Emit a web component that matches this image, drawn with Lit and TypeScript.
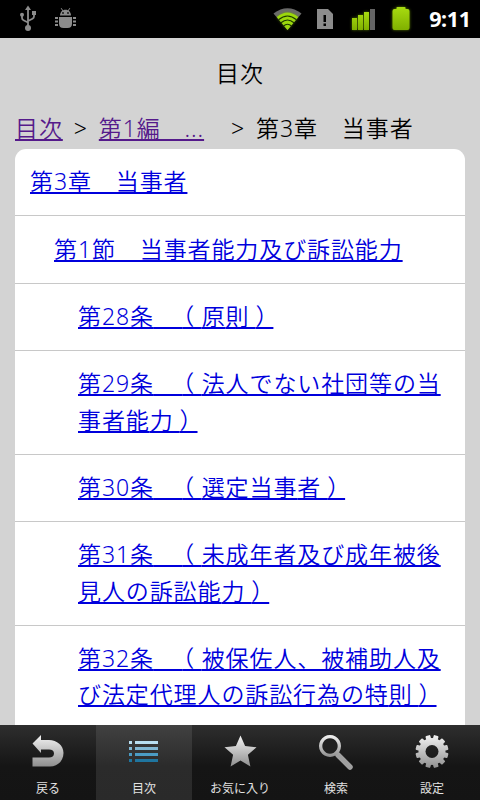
import { LitElement, html, svg, css } from "lit";
import { customElement } from "lit/decorators.js";

interface Entry { level: number; lines: string[]; }

const ENTRIES: Entry[] = [
  { level: 0, lines: ["第3章　当事者"] },
  { level: 1, lines: ["第1節　当事者能力及び訴訟能力"] },
  { level: 2, lines: ["第28条　（原則）"] },
  { level: 2, lines: ["第29条　（法人でない社団等の当", "事者能力）"] },
  { level: 2, lines: ["第30条　（選定当事者）"] },
  { level: 2, lines: ["第31条　（未成年者及び成年被後", "見人の訴訟能力）"] },
  { level: 2, lines: ["第32条　（被保佐人、被補助人及", "び法定代理人の訴訟行為の特則）"] },
];

@customElement("status-bar")
class StatusBar extends LitElement {
  static styles = css`
    :host { display: flex; height: 38px; background: #000; align-items: center; justify-content: space-between; }
    svg { display: block; }
    .clock { color: #fff; font: bold 21.5px/38px "Noto Sans", sans-serif; width: 50px; text-align: center; margin-right: 5px; letter-spacing: -0.3px; }
    .group { display: flex; align-items: center; height: 38px; }
  `;
  render() {
    return html`
      <div class="group">
        <svg width="100" height="38" viewBox="0 0 100 38">
          <g fill="none" stroke="#8c8c8c" stroke-width="1.8">
            <path d="M28 27V9M28 22.500l-4.500-2.300q-1.500-.8-1.500-2.500V15M28 21l4.500-2.300q1.500-.8 1.500-2.500V14"/>
          </g>
          <g fill="#8c8c8c">
            <path d="M28 5.500l3 4.500h-6z"/><circle cx="28" cy="28" r="3"/><circle cx="22" cy="14.800" r="2"/><rect x="32" y="11" width="4" height="4"/>
            <path d="M60 15.500c0-3.500 2.400-5.800 5.500-5.800s5.500 2.300 5.500 5.800z"/>
            <path d="M59 17h13v6.500q0 4.500-4.500 4.500h-4q-4.500 0-4.500-4.500z"/>
            <path d="M55 17h3v2h-3zM55 20.500h3v2h-3zM55 24h3v2h-3zM73 17h3v2h-3zM73 20.500h3v2h-3zM73 24h3v2h-3z"/>
          </g>
          <path d="M63 11l-1.800-2.800M68 11l1.800-2.800" stroke="#8c8c8c" stroke-width="1"/>
          <circle cx="63" cy="13" r=".9" fill="#111"/><circle cx="68" cy="13" r=".9" fill="#111"/>
        </svg>
      </div>
      <div class="group">
        <svg width="155" height="38" viewBox="270 0 155 38">
          <defs>
            <linearGradient id="g" x2="0" y2="1"><stop stop-color="#a8dc10"/><stop offset="1" stop-color="#80b000"/></linearGradient>
            <filter id="glow" x="-40%" y="-40%" width="180%" height="180%"><feGaussianBlur stdDeviation="1.500"/></filter>
          </defs>
          <path d="M273.500 13.500Q287.500 3 301.500 13.500L287.500 30z" fill="#6a6a6a"/>
          <path d="M276.800 17Q287.500 8 298.200 17L287.500 30z" fill="#6fa000" filter="url(#glow)" opacity=".6"/>
          <path d="M276.800 17Q287.500 8 298.200 17L287.500 30z" fill="#9bd80c"/>
          <path d="M278.500 19.800Q287.500 12.200 296.500 19.800M281 22.800Q287.500 17.200 294 22.800M283.500 26Q287.500 22.500 291.500 26" fill="none" stroke="#1c3600" stroke-width="1.200"/>
          <path d="M317 9h11l5 5v15h-16z" fill="#8c8c8c"/>
          <path d="M323.500 15h2.500v7h-2.500zM323.500 23.500h2.500v2.500h-2.500z" fill="#000"/>
          <path d="M352 18h5v12h-5zM358 15h5v15h-5zM364 12h5v18h-5z" fill="#76a800" filter="url(#glow)" opacity=".7"/>
          <path d="M352 18h5v12h-5zM358 15h5v15h-5zM364 12h5v18h-5z" fill="url(#g)"/>
          <path d="M370 9h5v21h-5z" fill="#646464"/>
          <path d="M392.500 11q0-2 2-2h2v-2h9v2h2q2 0 2 2v17q0 2-2 2h-13q-2 0-2-2z" fill="#80b000" filter="url(#glow)" opacity=".7"/>
          <path d="M392.500 11q0-2 2-2h2v-1.500q0-.5 1-.5h7q1 0 1 .5v1.500h2q2 0 2 2v17q0 2-2 2h-13q-2 0-2-2z" fill="url(#g)"/>
        </svg>
        <div class="clock">9:11</div>
      </div>`;
  }
}

@customElement("contents-list")
class ContentsList extends LitElement {
  static styles = css`
    :host { display: block; margin: 0 15px; background: #fff; border-radius: 11px 11px 0 0; }
    .row { border-bottom: 1px solid #c8c8c8; padding: 14.3px 0 15.9px 15px; line-height: 36.2px; white-space: nowrap; }
    .l1 { padding-left: 39px; }
    .l2 { padding-left: 63px; }
    .link { color: #0000dc; text-decoration: underline; text-decoration-thickness: 1.5px; text-underline-offset: 2px; text-decoration-skip-ink: none; text-spacing-trim: space-all; }
    .gap { letter-spacing: 5.9px; }
    .open { letter-spacing: 7.4px; font-feature-settings: "halt"; }
    .close { letter-spacing: 6.4px; font-feature-settings: "halt"; }
    .last { letter-spacing: 6.9px; }
  `;
  private label(line: string) {
    const closed = line.endsWith("）");
    const body = closed ? line.slice(0, -2) : line;
    const last = closed ? html`<span class="last">${line.slice(-2, -1)}</span><span class="close">）</span>` : "";
    const at = body.indexOf("　（");
    if (at < 0) return html`${body}${last}`;
    return html`${body.slice(0, at)}<span class="gap">　</span><span class="open">（</span>${body.slice(at + 2)}${last}`;
  }
  render() {
    return ENTRIES.map(e => html`<div class="row l${e.level}">${e.lines.map(l => html`<div><a class="link">${this.label(l)}</a></div>`)}</div>`);
  }
}

const metal = svg`<defs><linearGradient id="m" x1="0" y1="0" x2="0" y2="1"><stop stop-color="#f4f4f4"/><stop offset="1" stop-color="#8e8e8e"/></linearGradient></defs>`;

const teeth = Array.from({ length: 12 }, (_, i) =>
  svg`<rect x="21.500" y="3.500" width="5" height="6" rx="1" transform="rotate(${i * 30 + 15} 24 20)"/>`);

const ICONS = {
  back: svg`<path d="M8.500 12.500L17 4v5h8c8 0 14.500 5.500 14.500 13S34 35.500 26 35.500H8.500v-9H25c3.200 0 5-1.500 5-4s-1.800-4-5-4h-8V22z" fill="url(#m)"/>`,
  list: svg`<g><path d="M9 10h3v3H9zM15 10h23v3H15z" fill="#b9def0"/><path d="M9 16h3v3H9zM15 16h23v3H15z" fill="#82b8d4"/><path d="M9 22h3v3H9zM15 22h23v3H15z" fill="#4b9cc4"/><path d="M9 28h3v3H9zM15 28h23v3H15z" fill="#1f759f"/></g>`,
  star: svg`<path d="M24.500 4.500l4.600 10.600 11.400 1.100-8.600 7.600 2.500 11.700-9.900-6-9.900 6 2.500-11.700L8.500 16.200l11.400-1.100z" fill="url(#m)"/>`,
  search: svg`<path d="M26 24L38 36" stroke="#a0a0a0" stroke-width="5.500" stroke-linecap="round"/><circle cx="18" cy="15" r="9" fill="#202020"/><path fill-rule="evenodd" d="M18 4a11 11 0 1 0 .01 0zM18 7.300a7.700 7.700 0 1 1-.01 0z" fill="url(#m)"/>`,
  gear: svg`<mask id="t"><rect width="48" height="40" fill="#000"/><g fill="#fff" transform="translate(0 .5)"><circle cx="24" cy="20" r="13.500"/>${teeth}</g><circle cx="24" cy="20.500" r="6.500" fill="#000"/></mask><rect x="7" y="3.500" width="34" height="34" fill="url(#m)" mask="url(#t)"/>`,
};

@customElement("tab-bar")
class TabBar extends LitElement {
  static styles = css`
    :host { display: grid; grid-template-columns: repeat(5, 96px); height: 75px; background: linear-gradient(#2e2e2e 0, #151515 55%, #141414); }
    .tab { display: flex; flex-direction: column; align-items: center; padding-top: 6px; color: #e2e2e2; font-size: 12px; line-height: 18px; }
    .active { background: linear-gradient(#414141 0, #2b2b2b 55%, #2a2a2a); }
    svg { display: block; margin-bottom: 9px; }
  `;
  render() {
    const tabs = [
      { icon: ICONS.back, name: "戻る" }, { icon: ICONS.list, name: "目次", active: true },
      { icon: ICONS.star, name: "お気に入り" }, { icon: ICONS.search, name: "検索" }, { icon: ICONS.gear, name: "設定" },
    ];
    return tabs.map(t => html`<div class="tab ${t.active ? "active" : ""}">
      <svg width="48" height="40" viewBox="0 0 48 40">${metal}${t.icon}</svg><span>${t.name}</span></div>`);
  }
}

@customElement("app-root")
class AppRoot extends LitElement {
  static styles = css`
    :host { display: flex; flex-direction: column; width: 480px; height: 800px; overflow: hidden; background: #d3d3d3; color: #000; font-family: "Noto Sans", "Noto Sans CJK JP", sans-serif; }
    status-bar, tab-bar { flex: none; }
    .page { flex: 1; min-height: 0; overflow: hidden; font-size: 23px; font-weight: 350; letter-spacing: 0.9px; }
    .title { height: 72px; line-height: 71px; text-align: center; }
    .crumbs { display: flex; height: 39px; line-height: 37px; padding-left: 15px; white-space: pre; }
    .crumb { color: #551a8b; text-decoration: underline; text-decoration-thickness: 1.5px; text-underline-offset: 2px; text-decoration-skip-ink: none; }
    .sep { width: 36px; text-align: center; }
    .wide { margin-left: 16px; }
  `;
  render() {
    return html`
      <status-bar></status-bar>
      <div class="page">
        <div class="title">目次</div>
        <div class="crumbs"><a class="crumb">目次</a><span class="sep">&gt;</span><a class="crumb">第1編　...</a><span class="sep wide">&gt;</span><span>第3章　当事者</span></div>
        <contents-list></contents-list>
      </div>
      <tab-bar></tab-bar>`;
  }
}
